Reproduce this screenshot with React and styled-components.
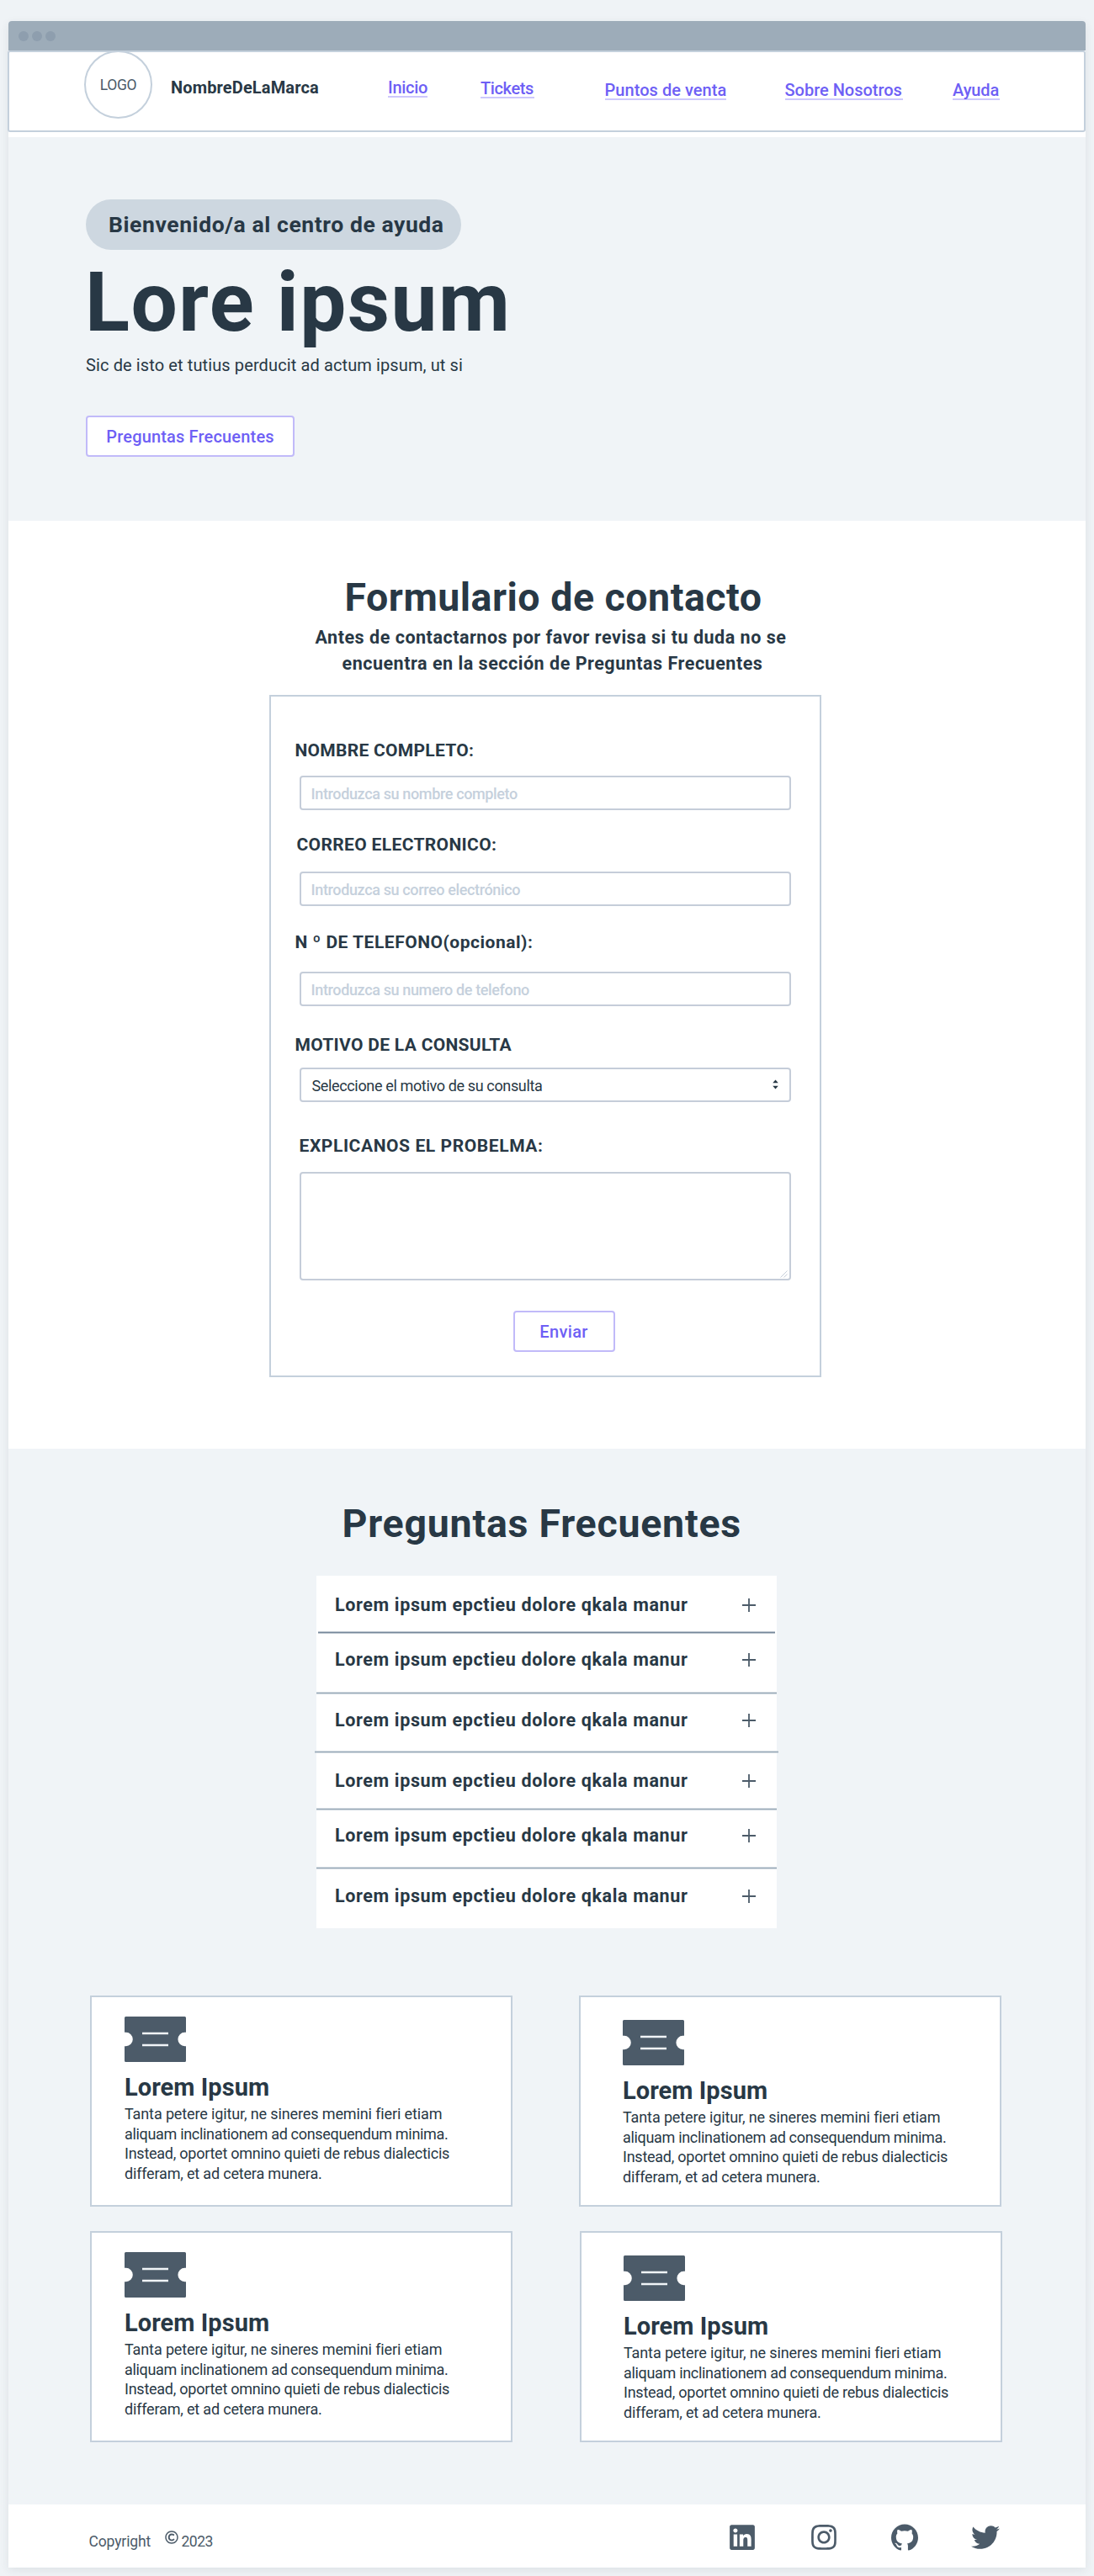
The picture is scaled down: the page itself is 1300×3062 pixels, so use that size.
import React from 'react';
import styled, { createGlobalStyle } from 'styled-components';
import { FaLinkedin, FaInstagram, FaTwitter, FaRegCopyright } from 'react-icons/fa';
import { SiGithub } from 'react-icons/si';

const ink = '#283845';
const slate = '#4c5b69';
const line = '#c4d0dc';
const violet = '#6e5ff5';
const violetSoft = '#c1baf9';
const mist = '#f0f4f7';

const Global = createGlobalStyle`
  *, *::before, *::after { box-sizing: border-box; }
  body {
    margin: 0;
    background: #eff3f6;
    color: ${ink};
    font-family: Roboto, "Liberation Sans", sans-serif;
  }
  h1, h2, h3, p { margin: 0; }
`;

const Window = styled.div`
  width: 1280px;
  margin: 25px 10px 10px;
  background: #fff;
  border-radius: 4px 4px 0 0;
  box-shadow: 0 3px 11px rgba(40, 56, 69, 0.09);
`;

const TitleBar = styled.div`
  display: flex;
  align-items: center;
  gap: 4px;
  height: 35px;
  padding: 1px 0 0 12px;
  background: #9dacb9;
  border-radius: 4px 4px 0 0;
`;

const Dot = styled.span`
  width: 12px;
  height: 12px;
  border-radius: 50%;
  background: #8e9eae;
`;

const Nav = styled.nav`
  display: flex;
  align-items: flex-start;
  width: 1281px;
  height: 97px;
  margin: 0 0 6px -1px;
  border: 2px solid ${line};
  border-radius: 3px;
  background: #fff;
  white-space: nowrap;
`;

const Logo = styled.div`
  display: flex;
  align-items: center;
  justify-content: center;
  width: 81px;
  height: 81px;
  margin: -2px 0 0 89px;
  border: 2px solid ${line};
  border-radius: 50%;
  background: #fff;
  color: ${slate};
  font-size: 17.5px;
  font-weight: 400;
  letter-spacing: -0.4px;
`;

const Brand = styled.span`
  width: 177px;
  margin: 30px 0 0 22px;
  font-size: 20px;
  line-height: 24px;
  font-weight: 700;
  letter-spacing: 0.14px;
`;

const NavLink = styled.a`
  width: ${(p) => p.$w}px;
  margin: ${(p) => p.$top}px 0 0 ${(p) => p.$gap}px;
  border-bottom: 2px solid #cdc8fc;
  color: ${violet};
  font-size: 20px;
  line-height: 20px;
  font-weight: 500;
  letter-spacing: ${(p) => p.$ls}px;
  text-decoration: none;
`;

const Hero = styled.section`
  display: flex;
  flex-direction: column;
  align-items: flex-start;
  height: 456px;
  padding: 74px 0 0 92px;
  background: ${mist};
`;

const Pill = styled.div`
  width: 446px;
  height: 60px;
  padding-left: 27px;
  border-radius: 30px;
  background: #cdd7e0;
  font-size: 26.5px;
  line-height: 60px;
  font-weight: 700;
  letter-spacing: 0.58px;
  white-space: nowrap;
`;

const HeroTitle = styled.h1`
  margin: 15px 0 0 -1px;
  font-size: 98px;
  line-height: 96px;
  font-weight: 700;
  letter-spacing: 1.45px;
`;

const HeroText = styled.p`
  margin: 14px 0 48px;
  font-size: 20px;
  line-height: 24px;
  letter-spacing: 0.115px;
`;

const Button = styled.button`
  width: ${(p) => p.$w}px;
  height: 49px;
  padding: 1px 0 0;
  border: 2px solid ${violetSoft};
  border-radius: 4px;
  background: #fff;
  color: ${violet};
  font: 500 20px Roboto, "Liberation Sans", sans-serif;
  letter-spacing: ${(p) => p.$ls}px;
`;

const Contact = styled.section`
  height: 1103px;
  padding-top: 64px;
  background: #fff;
`;

const Heading = styled.h2`
  margin-left: ${(p) => p.$left}px;
  font-size: 46.5px;
  line-height: 54px;
  font-weight: 700;
  letter-spacing: ${(p) => p.$ls}px;
  white-space: nowrap;
`;

const Lead = styled.p`
  margin-top: 6px;
  font-size: 21.5px;
  line-height: 30.5px;
  font-weight: 700;
  letter-spacing: 0.52px;
  white-space: nowrap;
`;

const LeadLine = styled.span`
  display: block;
  padding-left: ${(p) => p.$left}px;
`;

const Panel = styled.form`
  display: flex;
  flex-direction: column;
  width: 656px;
  height: 811px;
  margin: 22px 0 0 309.5px;
  padding: 52px 34px 0;
  border: 2px solid ${line};
`;

const Label = styled.label`
  margin: ${(p) => p.$top}px 0 ${(p) => p.$bottom}px ${(p) => p.$left}px;
  font-size: 21px;
  line-height: 24px;
  font-weight: 700;
  letter-spacing: ${(p) => p.$ls}px;
`;

const Input = styled.input`
  width: 584px;
  height: 41px;
  padding: 2px 12px 0;
  border: 2px solid #c5cdd9;
  border-radius: 4px;
  background: #fff;
  font: 500 18px Roboto, "Liberation Sans", sans-serif;
  letter-spacing: -0.36px;
  &::placeholder { color: #c5d0dc; opacity: 1; }
`;

const Select = styled.div`
  display: flex;
  align-items: center;
  justify-content: space-between;
  width: 584px;
  height: 41px;
  padding: 1px 13px 0 13px;
  border: 2px solid #c5cdd9;
  border-radius: 4px;
  font-size: 18px;
  letter-spacing: -0.355px;
`;

const SelectArrows = styled.svg`
  width: 7px;
  height: 12px;
  margin-top: -3px;
  fill: ${ink};
`;

const AreaWrap = styled.div`
  position: relative;
  width: 584px;
  height: 129px;
`;

const Area = styled.textarea`
  display: block;
  width: 100%;
  height: 100%;
  border: 2px solid #c5cdd9;
  border-radius: 4px;
  background: #fff;
  resize: none;
`;

const Grip = styled.svg`
  position: absolute;
  right: 4px;
  bottom: 3px;
  width: 9px;
  height: 9px;
  stroke: #c5cdd9;
`;

const Submit = styled.div`
  margin: 36px 0 0 254px;
`;

const Faq = styled.section`
  height: 1255px;
  padding-top: 62px;
  background: ${mist};
`;

const FaqList = styled.div`
  width: 546.5px;
  height: 419px;
  margin: 35px 0 80px 366px;
  background: #fff;
`;

const FaqItem = styled.div`
  display: flex;
  flex-direction: column;
  justify-content: space-between;
  height: ${(p) => p.$h}px;
  padding-top: ${(p) => p.$top}px;
`;

const Question = styled.div`
  display: flex;
  align-items: center;
  justify-content: space-between;
  padding: 0 24.5px 0 22px;
  font-size: 21.5px;
  line-height: 24px;
  font-weight: 700;
  letter-spacing: 0.64px;
  white-space: nowrap;
`;

const Plus = styled.svg`
  width: 16px;
  height: 16px;
  stroke: ${slate};
  stroke-width: 1.8;
`;

const Divider = styled.div`
  height: 3px;
  margin: 0 ${(p) => p.$inset}px;
  border: solid ${(p) => (p.$dark ? '#bcc5ce' : '#d0d8df')};
  border-width: 1px 0;
  background: ${(p) => (p.$dark ? '#75879a' : '#9aabb9')};
`;

const Cards = styled.div`
  display: grid;
  grid-template-columns: 502px 502px;
  gap: 29px 79px;
  margin-left: 97px;
`;

const Card = styled.article`
  width: 502px;
  height: 251px;
  margin-left: ${(p) => p.$shift}px;
  padding: ${(p) => (p.$right ? '27px 0 0 50px' : '23px 0 0 39px')};
  border: 2px solid ${line};
  background: #fff;
`;

const TicketIcon = styled.svg`
  display: block;
  width: 73px;
  height: 54px;
`;

const CardTitle = styled.h3`
  margin-top: 13px;
  font-size: 29px;
  line-height: 34px;
  font-weight: 700;
  letter-spacing: 0.067px;
`;

const CardText = styled.p`
  margin-top: 3px;
  font-size: 18px;
  line-height: 23.7px;
  white-space: nowrap;
`;

const CardLine = styled.span`
  display: block;
  letter-spacing: ${(p) => p.$ls}px;
`;

const Footer = styled.footer`
  display: flex;
  align-items: flex-start;
  height: 75px;
  padding-left: 95.5px;
  background: #fff;
  color: ${slate};
`;

const FootText = styled.span`
  width: ${(p) => p.$w}px;
  margin-top: 34px;
  font-size: 17.5px;
  line-height: 20px;
  letter-spacing: ${(p) => p.$ls}px;
`;

const CopyMark = styled.span`
  display: flex;
  width: 20px;
  margin-top: 31px;
  font-size: 16px;
`;

const Social = styled.div`
  display: flex;
  align-items: center;
  gap: 63px;
  height: 34px;
  margin: 22px 0 0 auto;
  padding-right: 102.5px;
`;

const links = [
  ['Inicio', 47, 32, 81, -0.286],
  ['Tickets', 64, 33, 63, -0.389],
  ['Puntos de venta', 144, 35, 83.5, 0.049],
  ['Sobre Nosotros', 140, 35, 70, -0.02],
  ['Ayuda', 56, 35, 59.5, -0.115],
];

// Row height, space above the question, and divider inset (null on the last row).
const questions = [
  [69, 23, 2],
  [72, 19, 0],
  [70, 19, -2],
  [68, 21, 0],
  [70, 18, 0],
  [70, 20, null],
];

const cardLines = [
  ['Tanta petere igitur, ne sineres memini fieri etiam', -0.123],
  ['aliquam inclinationem ad consequendum minima.', -0.321],
  ['Instead, oportet omnino quieti de rebus dialecticis', -0.249],
  ['differam, et ad cetera munera.', -0.178],
];

function Ticket() {
  return (
    <TicketIcon viewBox="0 0 73 54">
      <path
        fill={slate}
        d="M1.5 0H71.5Q73 0 73 1.5V18.8H71.6A8.2 8.2 0 0 0 71.6 35.2H73V52.5Q73 54 71.5 54H1.5Q0 54 0 52.5V35.2H1.6A8.2 8.2 0 0 0 1.6 18.8H0V1.5Q0 0 1.5 0Z"
      />
      <path stroke={mist} strokeWidth="2.4" d="M21 20H52M21 34H52" />
    </TicketIcon>
  );
}

function InfoCard({ right, shift = 0 }) {
  return (
    <Card $right={right} $shift={shift}>
      <Ticket />
      <CardTitle>Lorem Ipsum</CardTitle>
      <CardText>
        {cardLines.map(([text, ls]) => (
          <CardLine key={text} $ls={ls}>{text}</CardLine>
        ))}
      </CardText>
    </Card>
  );
}

export default function App() {
  return (
    <>
      <Global />
      <Window>
        <TitleBar>
          <Dot />
          <Dot />
          <Dot />
        </TitleBar>
        <Nav>
          <Logo>LOGO</Logo>
          <Brand>NombreDeLaMarca</Brand>
          {links.map(([text, w, top, gap, ls]) => (
            <NavLink key={text} $w={w} $top={top} $gap={gap} $ls={ls}>{text}</NavLink>
          ))}
        </Nav>

        <Hero>
          <Pill>Bienvenido/a al centro de ayuda</Pill>
          <HeroTitle>Lore ipsum</HeroTitle>
          <HeroText>Sic de isto et tutius perducit ad actum ipsum, ut si</HeroText>
          <Button $w={248} $ls={0.168}>Preguntas Frecuentes</Button>
        </Hero>

        <Contact>
          <Heading $left={399.5} $ls={0.52}>Formulario de contacto</Heading>
          <Lead>
            <LeadLine $left={364.5}>Antes de contactarnos por favor revisa si tu duda no se</LeadLine>
            <LeadLine $left={396.5}>encuentra en la sección de Preguntas Frecuentes</LeadLine>
          </Lead>
          <Panel>
            <Label $top={0} $bottom={18} $left={-5} $ls={0.281}>NOMBRE COMPLETO:</Label>
            <Input placeholder="Introduzca su nombre completo" />
            <Label $top={29} $bottom={20} $left={-3} $ls={0.351}>CORREO ELECTRONICO:</Label>
            <Input placeholder="Introduzca su correo electrónico" />
            <Label $top={31} $bottom={23} $left={-5} $ls={0.514}>N º DE TELEFONO(opcional):</Label>
            <Input placeholder="Introduzca su numero de telefono" />
            <Label $top={34} $bottom={15} $left={-5} $ls={0.303}>MOTIVO DE LA CONSULTA</Label>
            <Select>
              Seleccione el motivo de su consulta
              <SelectArrows viewBox="0 0 7 12">
                <path d="M3.5 0.5L6.8 4.3H0.2ZM3.5 11.5L6.8 7.7H0.2Z" />
              </SelectArrows>
            </Select>
            <Label $top={40} $bottom={19} $left={0} $ls={0.587}>EXPLICANOS EL PROBELMA:</Label>
            <AreaWrap>
              <Area />
              <Grip viewBox="0 0 9 9">
                <path d="M0.5 8.5L8.5 0.5M4.5 8.5L8.5 4.5" />
              </Grip>
            </AreaWrap>
            <Submit>
              <Button type="button" $w={121} $ls={0.354}>Enviar</Button>
            </Submit>
          </Panel>
        </Contact>

        <Faq>
          <Heading $left={396.5} $ls={0.76}>Preguntas Frecuentes</Heading>
          <FaqList>
            {questions.map(([h, top, inset], i) => (
              <FaqItem key={i} $h={h} $top={top}>
                <Question>
                  Lorem ipsum epctieu dolore qkala manur
                  <Plus viewBox="0 0 16 16">
                    <path d="M0 8H16M8 0V16" />
                  </Plus>
                </Question>
                {inset !== null && <Divider $inset={inset} $dark={i === 0} />}
              </FaqItem>
            ))}
          </FaqList>
          <Cards>
            <InfoCard />
            <InfoCard right />
            <InfoCard />
            <InfoCard right shift={1} />
          </Cards>
        </Faq>

        <Footer>
          <FootText $w={90} $ls={-0.129}>Copyright</FootText>
          <CopyMark>
            <FaRegCopyright />
          </CopyMark>
          <FootText $w={40} $ls={-0.5}>2023</FootText>
          <Social>
            <FaLinkedin size={34} />
            <FaInstagram size={34} />
            <SiGithub size={32} />
            <FaTwitter size={34} />
          </Social>
        </Footer>
      </Window>
    </>
  );
}
